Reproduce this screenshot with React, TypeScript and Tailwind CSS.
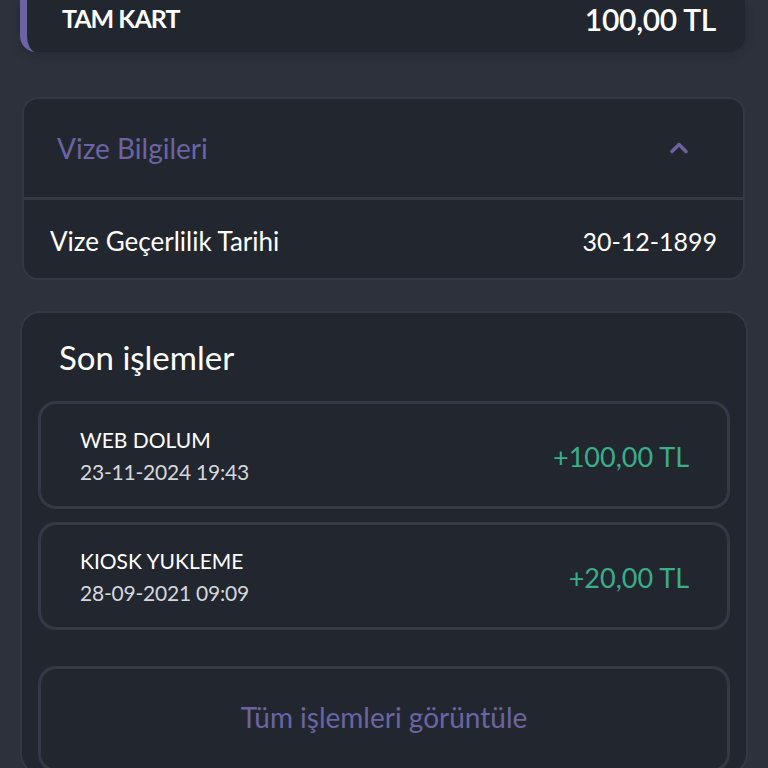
import { ChevronUp } from "lucide-react";

type Txn = {
  title: string;
  date: string;
  amount: string;
};

const txns: Txn[] = [
  { title: "WEB DOLUM", date: "23-11-2024 19:43", amount: "+100,00 TL" },
  { title: "KIOSK YUKLEME", date: "28-09-2021 09:09", amount: "+20,00 TL" },
];

export default function App() {
  return (
    <div
      className="h-[768px] w-[768px] overflow-hidden bg-[#2c313c] text-white"
      style={{ fontFamily: "Lato, 'Open Sans', sans-serif" }}
    >
      {/* Card type */}
      <div className="ml-[20px] mr-[23px] flex h-[52px] items-center justify-between rounded-b-2xl border-l-[7px] border-[#6b64a3] bg-[#22272f] pb-[14px] pl-[35px] pr-[29px] shadow-[0_4px_10px_rgba(0,0,0,0.15)]">
        <span className="text-[25px] font-bold tracking-[-0.04em]">TAM KART</span>
        <span className="text-[30px] font-semibold tracking-[-0.01em]">100,00 TL</span>
      </div>

      {/* Vize */}
      <div className="ml-[22px] mr-[23px] mt-[45px] overflow-hidden rounded-2xl border-2 border-[#323844] bg-[#22272f]">
        <div className="flex h-[98px] items-center justify-between pl-[33px] pr-[50px]">
          <span className="text-[28px] text-[#6b64a3]">Vize Bilgileri</span>
          <ChevronUp className="h-7 w-7 text-[#6b64a3]" strokeWidth={3} />
        </div>
        <div className="h-[3px] bg-[#343a45]" />
        <div className="flex h-[78px] items-center justify-between pl-[26px] pr-[26px] pt-[5px]">
          <span className="text-[26px]">Vize Geçerlilik Tarihi</span>
          <span className="text-[25px]">30-12-1899</span>
        </div>
      </div>

      {/* Son işlemler */}
      <div className="ml-[20px] mr-[20px] mt-[31px] rounded-[20px] border-2 border-[#323844] bg-[#22272f] px-[16px]">
        <div className="flex h-[88px] items-center pl-[21px]">
          <span className="text-[33px] leading-[40px]">Son işlemler</span>
        </div>
        <div className="flex flex-col gap-[13px]">
          {txns.map((t) => (
            <div
              key={t.title}
              className="flex h-[108px] items-center justify-between rounded-[18px] border-[3px] border-[#343a45] pl-[39px] pr-[38px]"
            >
              <div className="flex flex-col gap-[6px] pt-[1px]">
                <span className="text-[21px] leading-[26px]">{t.title}</span>
                <span className="text-[21px] leading-[26px] tracking-[-0.01em] text-[#d4d7dc]">{t.date}</span>
              </div>
              <span className="pt-[5px] text-[27px] text-[#3aae8a]">{t.amount}</span>
            </div>
          ))}
        </div>
        <div className="mt-[36px] flex h-[106px] items-center justify-center rounded-[18px] border-[3px] border-[#343a45] pb-[4px]">
          <span className="text-[28px] text-[#6b64a3]">Tüm işlemleri görüntüle</span>
        </div>
      </div>
    </div>
  );
}
